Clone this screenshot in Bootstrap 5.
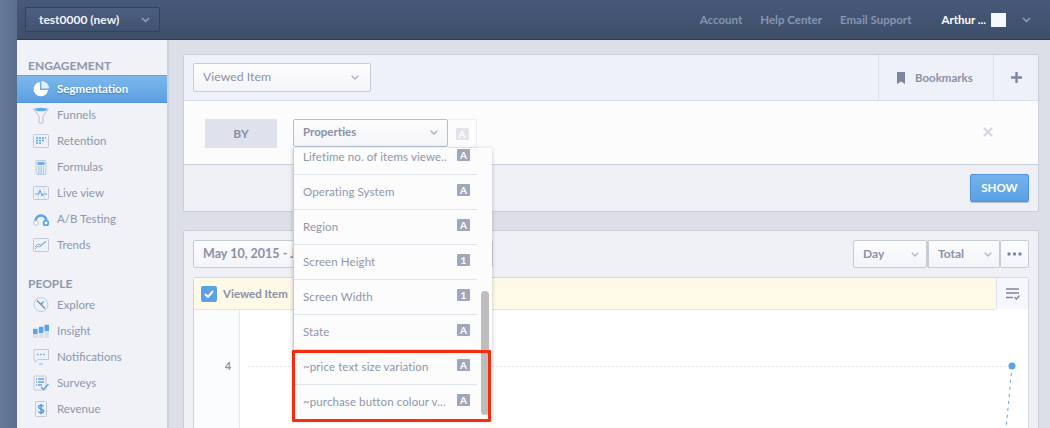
<!DOCTYPE html>
<html lang="en">
<head>
  <meta charset="UTF-8">
  <title>Segmentation</title>
  <link href="https://cdn.jsdelivr.net/npm/bootstrap@5.3.2/dist/css/bootstrap.min.css" rel="stylesheet">
  <style>
    html, body { height: 428px; overflow: hidden; }
    body { font-family: Lato, "Liberation Sans", sans-serif; font-size: 12px; color: #8a91a6; background: #dcdfe7; }
    svg { display: block; flex: none; }
    .app-shell { height: 428px; overflow: hidden; }
    .app-strip { width: 17px; flex: none; background: linear-gradient(90deg, #66799a, #5b6e8d); }
    .app-col { width: 1033px; flex: none; }
    .topbar { height: 40px; background: linear-gradient(#47597a, #3e4f69); border-bottom: 1px solid #2f3c50; padding-left: 8px; padding-right: 19px; }
    .proj-btn { width: 135px; height: 25px; padding: 0 9px 0 13px; background: linear-gradient(#4c5f80, #415270); border: 1px solid #334259; border-radius: 2px; color: #f2f4f8; font-weight: 700; }
    .top-link { color: #8496b1; font-weight: 700; font-size: 11.5px; margin-right: 18px; text-decoration: none; }
    .top-user { color: #fff; font-weight: 700; font-size: 11.5px; margin-left: 12px; }
    .top-avatar { width: 15px; height: 14px; background: #f7f8fb; margin-left: 5px; margin-right: 16px; }
    .side { width: 152px; flex: none; height: 388px; background: #f0f2f7; border-right: 2px solid #c9d1da; padding-top: 19px; }
    .side-head { padding-left: 11px; font-weight: 700; font-size: 12px; line-height: 14px; color: #8f96a9; height: 16px; }
    .side-head.second { margin-top: 19px; margin-bottom: -1px; }
    .side-item { height: 26px; padding-left: 16px; gap: 8px; color: #8f96a9; font-size: 11.5px; text-decoration: none; }
    .side-item.active { height: 28px; margin-bottom: -1px; background: linear-gradient(#7cb8ec, #5c9fe2); border-top: 1px solid #5ea2e0; border-bottom: 1px solid #4f94d8; color: #fff; font-weight: 700; text-shadow: 0 1px 1px #3f7fc0; }
    .content { width: 881px; height: 388px; overflow: hidden; padding: 14px 11px 0 14px; }
    .pane { border: 1px solid #c9ced9; border-radius: 2px; background: #eff0f5; }
    .pane-head { height: 46px; background: #eef1f9; border-bottom: 1px solid #dde0e9; padding-left: 9px; }
    .sel { background: linear-gradient(#fdfdfe, #f3f4f8); border: 1px solid #c6cbd6; border-radius: 2px; color: #8a91a6; }
    .sel-event { width: 178px; height: 29px; padding: 0 11px 0 9px; font-size: 12.3px; }
    .head-cell { height: 45px; border-left: 1px solid #dde0e9; font-weight: 700; font-size: 11.5px; }
    .bm-cell { width: 115px; padding-left: 18px; gap: 10px; }
    .plus-cell { width: 45px; }
    .pane-body { height: 64px; background: #fcfcfc; border-bottom: 1px solid #c9ced9; padding-left: 21px; padding-right: 45px; padding-top: 2px; }
    .by-box { width: 72px; height: 29px; background: #dfe2ec; color: #878ea3; font-weight: 700; font-size: 12px; margin-right: 16px; }
    .prop-wrap { width: 184px; height: 29px; }
    .sel-prop { width: 155px; height: 28px; padding: 0 9px 2px; border-color: #b4bfcc; font-weight: 700; font-size: 11.5px; }
    .prop-type { width: 29px; height: 29px; border: 1px solid #eceef2; border-left: 0; }
    .type-tag { width: 13px; height: 12px; border-radius: 1px; background: #a1a7ba; color: #fff; font-weight: 700; font-size: 10px; line-height: 12px; text-align: center; }
    .prop-type .type-tag { background: #e2e4ea; }
    .close-x { margin-top: -3px; }
    .pane-foot { height: 46px; padding-right: 9px; }
    .show-btn { width: 59px; height: 28px; padding: 0; background: linear-gradient(#74b3ec, #5a9fe6); border: 1px solid #4f93d6; border-radius: 2px; color: #fff; font-weight: 700; font-size: 11.5px; box-shadow: 0 1px 1px #b5bfcc; }
    .pane-chart { margin-top: 18px; height: 300px; }
    .chart-top { padding: 9px 9px 0 9px; height: 46px; }
    .date-btn { width: 300px; height: 28px; padding-left: 9px; font-weight: 700; font-size: 12.5px; }
    .sel-small { width: 74px; height: 28px; padding: 0 7px 0 9px; font-weight: 700; font-size: 12px; }
    .sel-small.two { width: 73px; border-left-width: 2px; }
    .more-btn { width: 29px; height: 28px; }
    .chart-box { margin: 0 9px; height: 200px; border: 1px solid #d3d7e0; border-radius: 2px; background: #fff; }
    .chart-head { height: 32px; background: #fff9e8; border-bottom: 1px solid #eee4c6; padding-left: 7px; gap: 6px; font-weight: 700; font-size: 11.5px; }
    .chart-check { width: 16px; height: 16px; border-radius: 2px; background: #5aa0e6; }
    .chart-tool { width: 32px; height: 31px; background: #f6f7fa; border-left: 1px solid #dfe2e8; }
    .chart-axis { width: 46px; height: 170px; background: #fbfcfd; border-right: 1px solid #e6e8ee; padding-top: 49px; padding-right: 8px; font-weight: 700; font-size: 10.5px; color: #8a91a6; line-height: 14px; }
    .prop-menu { position: absolute; left: 0; top: 29px; width: 199px; height: 271px; z-index: 5; background: #fcfcfc; border-left: 1px solid #c6cbd6; box-shadow: 0 1px 4px rgba(80, 90, 110, .35); overflow: hidden; }
    .prop-list { width: 183px; margin-top: -8px; }
    .prop-row { height: 35px; border-bottom: 1px solid #dfe4ec; padding: 9px 7px 0 9px; font-size: 11.5px; letter-spacing: .1px; color: #8f96a9; }
    .prop-name { line-height: 16px; margin-top: 0; }
    .prop-scroll { position: absolute; left: 187px; top: 143px; width: 8px; height: 124px; border-radius: 4px; background: #bdbdbd; }
    .red-note { position: absolute; left: -1px; top: 231px; width: 199px; height: 72px; z-index: 6; border: 3px solid #fb2a0c; border-radius: 1px; }
  </style>
</head>
<body>
<div class="app-shell d-flex">
  <div class="app-strip"></div>
  <div class="app-col">
    <div class="topbar d-flex align-items-center">
      <div class="proj-btn d-flex align-items-center justify-content-between">
        <span>test0000 (new)</span>
        <svg width="9" height="6" viewBox="0 0 9 6"><path d="M1 1l3.5 3.5L8 1" fill="none" stroke="#8fa0b8" stroke-width="1.5"/></svg>
      </div>
      <div class="ms-auto d-flex align-items-center">
        <a class="top-link" href="#">Account</a>
        <a class="top-link" href="#">Help Center</a>
        <a class="top-link" href="#">Email Support</a>
        <span class="top-user">Arthur ...</span>
        <div class="top-avatar"></div>
        <svg width="9" height="6" viewBox="0 0 9 6"><path d="M1 1l3.5 3.5L8 1" fill="none" stroke="#8fa0b8" stroke-width="1.5"/></svg>
      </div>
    </div>
    <div class="d-flex">
      <div class="side">
        <div class="side-head">ENGAGEMENT</div>
        <a class="side-item active d-flex align-items-center" href="#">
          <svg width="16" height="16" viewBox="0 0 16 16"><path d="M7 1A7.200 7.200 0 1 0 15 9H7z" fill="#fff"/><path d="M8.500 0a7.500 7.500 0 0 1 7.500 7.500H8.500z" fill="#e4f0fb"/></svg>
          Segmentation</a>
        <a class="side-item d-flex align-items-center" href="#">
          <svg width="16" height="17" viewBox="0 0 16 17"><path d="M.5 2l15 0L10 9v6.500l-2 1-2-1V9z" fill="#eef1f6" stroke="#b5c0d2"/><ellipse cx="8" cy="2.500" rx="6" ry="1.800" fill="#62aaf0"/></svg>
          Funnels</a>
        <a class="side-item d-flex align-items-center" href="#">
          <svg width="16" height="14" viewBox="0 0 16 14"><rect x=".5" y=".5" width="15" height="13" rx="1" fill="#eef2f8" stroke="#c0c9d8"/><path d="M3 4h2M6 4h2M9 4h2M12 4h1M3 6.500h2M6 6.500h2M9 6.500h2M3 9h2M6 9h2" stroke="#5ca4ea" stroke-width="1.500"/></svg>
          Retention</a>
        <a class="side-item d-flex align-items-center" href="#">
          <svg width="16" height="15" viewBox="0 0 16 15"><rect x="3" y=".5" width="10" height="14" rx="1" fill="#e8eef7" stroke="#c0c9d8"/><rect x="4.500" y="2" width="7" height="3" fill="#6aaeee"/><path d="M5 7h6M5 9h6M5 11h6M5 13h6" stroke="#7fabd8" stroke-dasharray="1.500 1"/></svg>
          Formulas</a>
        <a class="side-item d-flex align-items-center" href="#">
          <svg width="16" height="14" viewBox="0 0 16 14"><rect x=".5" y=".5" width="15" height="13" rx="1" fill="#eef2f8" stroke="#c0c9d8"/><path d="M5 1v12M11 1v12" stroke="#d5dce6"/><path d="M2 8h4l1-4 2 6 1-2h4" fill="none" stroke="#5ca4ea"/></svg>
          Live view</a>
        <a class="side-item d-flex align-items-center" href="#">
          <svg width="16" height="13" viewBox="0 0 16 13"><path d="M2.500 8a5.500 5.500 0 0 1 11 0" fill="none" stroke="#5ca4ea" stroke-width="2.600"/><circle cx="3" cy="10" r="2.300" fill="#fff" stroke="#b8c2d0"/><circle cx="13" cy="10" r="2.400" fill="#fff" stroke="#5ca4ea" stroke-width="1.900"/></svg>
          A/B Testing</a>
        <a class="side-item d-flex align-items-center" href="#">
          <svg width="16" height="14" viewBox="0 0 16 14"><rect x=".5" y=".5" width="15" height="13" rx="1" fill="#eef2f8" stroke="#c0c9d8"/><path d="M2 11l3-3 2 1 3-3 3-2M2 9l3-3 3 1 5-4" fill="none" stroke="#88aed8"/></svg>
          Trends</a>
        <div class="side-head second">PEOPLE</div>
        <a class="side-item d-flex align-items-center" href="#">
          <svg width="16" height="16" viewBox="0 0 16 16"><circle cx="8" cy="7.500" r="7" fill="#eef2f8" stroke="#c0c9d8"/><path d="M4 3.500l8 8" stroke="#7a8aa3" stroke-width="1.300"/><path d="M11.500 3.500L8.700 8.500 6.800 6.600z" fill="#5ca4ea"/></svg>
          Explore</a>
        <a class="side-item d-flex align-items-center" href="#">
          <svg width="16" height="16" viewBox="0 0 16 16"><rect x="0" y="5" width="4.500" height="10" fill="#d9dfe9"/><rect x="5.800" y="3" width="4.500" height="12" fill="#d9dfe9"/><rect x="11.500" y="1" width="4.500" height="14" fill="#d9dfe9"/><rect x="0" y="6" width="4.500" height="5" fill="#5ca4ea"/><rect x="5.800" y="4" width="4.500" height="6" fill="#5ca4ea"/><rect x="11.500" y="2" width="4.500" height="6" fill="#5ca4ea"/></svg>
          Insight</a>
        <a class="side-item d-flex align-items-center" href="#">
          <svg width="16" height="16" viewBox="0 0 16 16"><path d="M1 .5h14.500v10H5L2 13.500V11H1z" fill="#eef2f8" stroke="#c0c9d8"/><path d="M4 5.500h1.500M7.200 5.500h1.500M10.400 5.500h1.500" stroke="#5ca4ea" stroke-width="1.600"/><path d="M6 15h4" stroke="#8fc0ee"/></svg>
          Notifications</a>
        <a class="side-item d-flex align-items-center" href="#">
          <svg width="16" height="16" viewBox="0 0 16 16"><rect x="1" y="1" width="12" height="14" rx="1" fill="#eef2f8" stroke="#c0c9d8"/><path d="M3 4h1M5 4h6M3 7h1M5 7h6M3 10h1M5 10h4" stroke="#5ca4ea" stroke-width="1.300"/><path d="M8 12l2.500 2.500L15.500 9" fill="none" stroke="#5ca4ea" stroke-width="1.500"/></svg>
          Surveys</a>
        <a class="side-item d-flex align-items-center" href="#">
          <svg width="16" height="16" viewBox="0 0 16 16"><rect x="2.500" y=".5" width="11" height="15" rx="1" fill="#eef2f8" stroke="#c0c9d8"/><path d="M10.500 5.500C10 4.500 9 4.300 8 4.300c-1.500 0-2.500.7-2.500 1.800C5.500 8.500 10.600 7.500 10.600 10c0 1.100-1.100 1.800-2.600 1.800-1.200 0-2.200-.4-2.700-1.300M8 3v10.300" fill="none" stroke="#4f9ae4" stroke-width="1.400"/></svg>
          Revenue</a>
      </div>
      <div class="content">
        <div class="pane">
          <div class="pane-head d-flex align-items-center">
            <div class="sel sel-event d-flex align-items-center justify-content-between">
              <span>Viewed Item</span>
              <svg width="8" height="5" viewBox="0 0 8 5"><path d="M.7.700L4 4 7.300.700" fill="none" stroke="#a7aebd" stroke-width="1.300"/></svg>
            </div>
            <div class="head-cell bm-cell d-flex align-items-center ms-auto">
              <svg width="8" height="12" viewBox="0 0 8 12"><path d="M0 0h8v12L4 9.500 0 12z" fill="#7d869f"/></svg>
              <span>Bookmarks</span>
            </div>
            <div class="head-cell plus-cell d-flex align-items-center justify-content-center">
              <svg width="11" height="11" viewBox="0 0 11 11"><path d="M5.500 0v11M0 5.500h11" stroke="#7d869f" stroke-width="2.400"/></svg>
            </div>
          </div>
          <div class="pane-body d-flex align-items-center">
            <div class="by-box d-flex align-items-center justify-content-center">BY</div>
            <div class="prop-wrap d-flex position-relative">
              <div class="sel sel-prop d-flex align-items-center justify-content-between">
                <span>Properties</span>
                <svg width="8" height="5" viewBox="0 0 8 5"><path d="M.7.700L4 4 7.300.700" fill="none" stroke="#a7aebd" stroke-width="1.300"/></svg>
              </div>
              <div class="prop-type d-flex align-items-center justify-content-center"><div class="type-tag">A</div></div>
              <div class="prop-menu">
                <div class="prop-list">
                  <div class="prop-row d-flex justify-content-between"><span class="prop-name">Lifetime no. of items viewe..</span><div class="type-tag">A</div></div>
                  <div class="prop-row d-flex justify-content-between"><span class="prop-name">Operating System</span><div class="type-tag">A</div></div>
                  <div class="prop-row d-flex justify-content-between"><span class="prop-name">Region</span><div class="type-tag">A</div></div>
                  <div class="prop-row d-flex justify-content-between"><span class="prop-name">Screen Height</span><div class="type-tag">1</div></div>
                  <div class="prop-row d-flex justify-content-between"><span class="prop-name">Screen Width</span><div class="type-tag">1</div></div>
                  <div class="prop-row d-flex justify-content-between"><span class="prop-name">State</span><div class="type-tag">A</div></div>
                  <div class="prop-row d-flex justify-content-between"><span class="prop-name">~price text size variation</span><div class="type-tag">A</div></div>
                  <div class="prop-row d-flex justify-content-between"><span class="prop-name">~purchase button colour v...</span><div class="type-tag">A</div></div>
                </div>
                <div class="prop-scroll"></div>
              </div>
              <div class="red-note"></div>
            </div>
            <svg class="close-x ms-auto" width="10" height="10" viewBox="0 0 10 10"><path d="M1 1l8 8M9 1l-8 8" stroke="#d4d8e2" stroke-width="2.400"/></svg>
          </div>
          <div class="pane-foot d-flex align-items-center justify-content-end">
            <button class="btn show-btn" type="button">SHOW</button>
          </div>
        </div>
        <div class="pane pane-chart">
          <div class="chart-top d-flex">
            <div class="sel date-btn d-flex align-items-center">May 10, 2015 - J</div>
            <div class="sel sel-small d-flex align-items-center justify-content-between ms-auto">
              <span>Day</span>
              <svg width="8" height="5" viewBox="0 0 8 5"><path d="M.7.700L4 4 7.300.700" fill="none" stroke="#b0b6c4" stroke-width="1.300"/></svg>
            </div>
            <div class="sel sel-small two d-flex align-items-center justify-content-between">
              <span>Total</span>
              <svg width="8" height="5" viewBox="0 0 8 5"><path d="M.7.700L4 4 7.300.700" fill="none" stroke="#b0b6c4" stroke-width="1.300"/></svg>
            </div>
            <div class="sel more-btn d-flex align-items-center justify-content-center">
              <svg width="15" height="4" viewBox="0 0 15 4"><circle cx="2" cy="2" r="1.700" fill="#7d869f"/><circle cx="7.500" cy="2" r="1.700" fill="#7d869f"/><circle cx="13" cy="2" r="1.700" fill="#7d869f"/></svg>
            </div>
          </div>
          <div class="chart-box">
            <div class="d-flex">
              <div class="chart-head d-flex align-items-center flex-grow-1">
                <div class="chart-check d-flex align-items-center justify-content-center">
                  <svg width="10" height="8" viewBox="0 0 10 8"><path d="M1 4l3 3 5-6" fill="none" stroke="#fff" stroke-width="2"/></svg>
                </div>
                <span>Viewed Item</span>
              </div>
              <div class="chart-tool d-flex align-items-center justify-content-center">
                <svg width="14" height="12" viewBox="0 0 14 12"><path d="M0 1h13M0 5h13M0 9.500h7" stroke="#7d869f" stroke-width="1.300"/><path d="M8.500 9l2 2 3-3.500" fill="none" stroke="#7d869f" stroke-width="1.300"/></svg>
              </div>
            </div>
            <div class="d-flex">
              <div class="chart-axis text-end">4</div>
              <svg width="787" height="170" viewBox="0 0 787 170">
                <path d="M8 56.500H772" stroke="#dfe2e8" stroke-dasharray="2 2"/>
                <path d="M772 56L765 130" stroke="#5ca4ea" stroke-dasharray="3 4" fill="none"/>
                <circle cx="772" cy="56" r="3.500" fill="#5ca4ea"/>
              </svg>
            </div>
          </div>
        </div>
      </div>
    </div>
  </div>
</div>
<script src="https://cdn.jsdelivr.net/npm/bootstrap@5.3.2/dist/js/bootstrap.bundle.min.js"></script>
</body>
</html>
